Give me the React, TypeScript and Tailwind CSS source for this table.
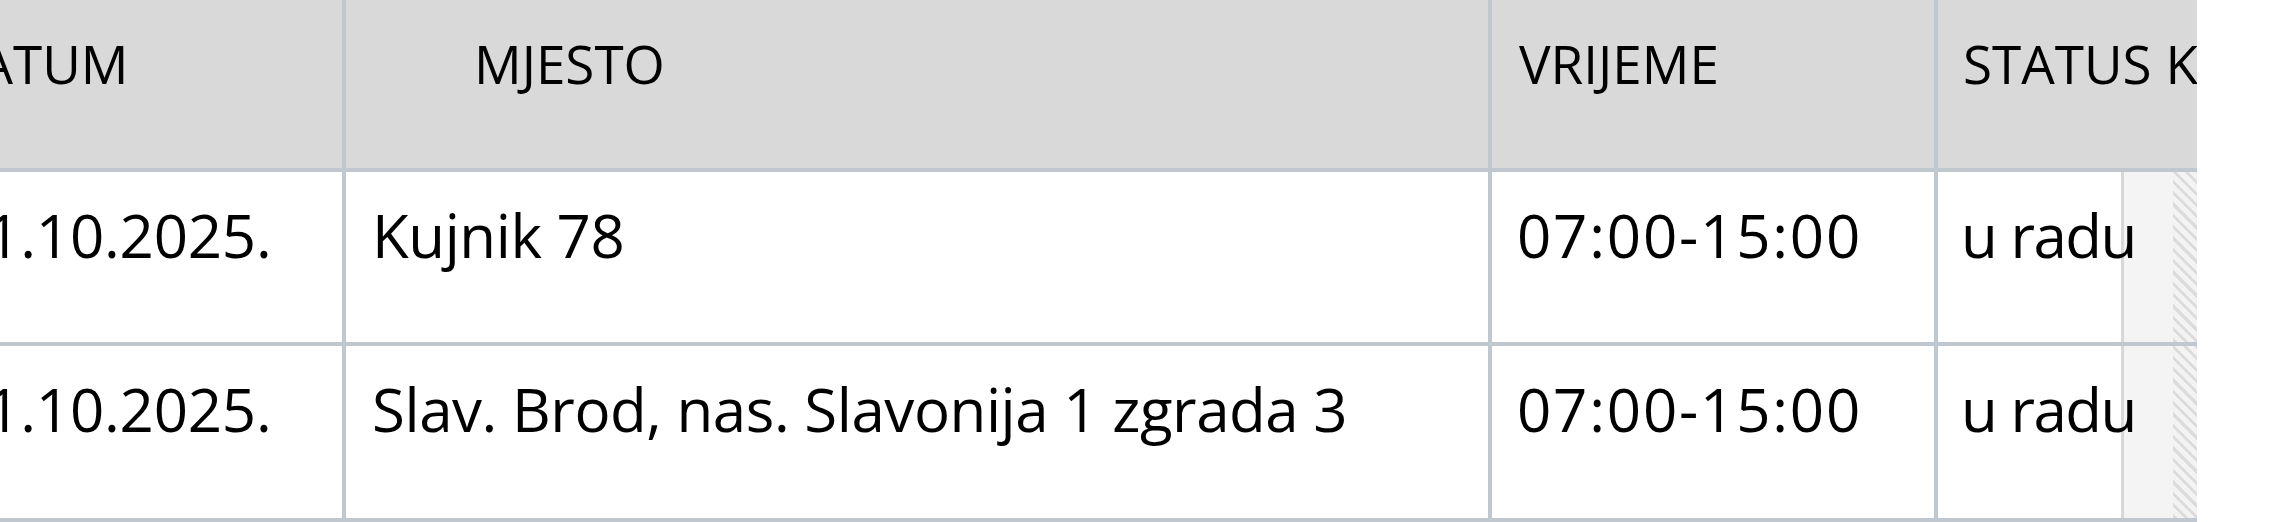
const rows = [
  { datum: '01.10.2025.', mjesto: 'Kujnik 78', vrijeme: '07:00-15:00', status: 'u radu' },
  { datum: '01.10.2025.', mjesto: 'Slav. Brod, nas. Slavonija 1 zgrada 3', vrijeme: '07:00-15:00', status: 'u radu' },
];

const bodyText = "text-[60px] leading-none font-medium text-black font-['Open_Sans',sans-serif] whitespace-nowrap";
const headText = "text-[53px] leading-none font-medium text-black font-['Open_Sans',sans-serif] whitespace-nowrap uppercase";

export default function App() {
  return (
    <div className="w-[2275px] h-[522px] bg-white overflow-hidden">
      <div className="w-[2197px] overflow-hidden">
        <div className="ml-[-65px] w-[2400px] flex flex-col">
          {/* header */}
          <div className="flex h-[172px] bg-[#d9d9d9] border-b-4 border-[#c0c7cf]">
            <div className={`w-[411px] shrink-0 border-r-4 border-[#c0c7cf] pl-[6px] pt-[37px] ${headText}`}>Datum</div>
            <div className={`w-[1146px] shrink-0 border-r-4 border-[#c0c7cf] pl-[128px] pt-[37px] ${headText}`}>Mjesto</div>
            <div className={`w-[446px] shrink-0 border-r-4 border-[#c0c7cf] pl-[27px] pt-[37px] ${headText}`}>Vrijeme</div>
            <div className={`flex-1 pl-[25px] pt-[37px] ${headText}`}>Status kvara</div>
          </div>

          {rows.map((r, i) => (
            <div key={i} className={`flex ${i === 0 ? 'h-[174px]' : 'h-[176px]'} bg-white border-b-4 border-[#c0c7cf]`}>
              <div className={`w-[411px] shrink-0 border-r-4 border-[#c0c7cf] pl-[17px] pt-[33px] tracking-[-0.2px] ${bodyText}`}>{r.datum}</div>
              <div className={`w-[1146px] shrink-0 border-r-4 border-[#c0c7cf] pl-[26px] pt-[33px] tracking-[-0.45px] ${bodyText}`}>{r.mjesto}</div>
              <div className={`w-[446px] shrink-0 border-r-4 border-[#c0c7cf] pl-[25px] pt-[33px] tracking-[1.8px] ${bodyText}`}>{r.vrijeme}</div>
              <div className="relative flex-1">
                {/* frozen action column peeking in from the right */}
                <div className="absolute top-0 bottom-0 left-[183px] flex">
                  <div className="w-[52px] bg-[#f4f4f4] border-l-[3px] border-[#d6d8db]" />
                  <div className="w-[24px] bg-[repeating-linear-gradient(45deg,#dcdcdc_0px,#dcdcdc_3px,#f3f3f3_3px,#f3f3f3_8px)]" />
                </div>
                <div className={`relative z-10 pl-[23px] pt-[33px] tracking-[-1.5px] ${bodyText}`}>{r.status}</div>
              </div>
            </div>
          ))}
        </div>
      </div>
    </div>
  );
}
